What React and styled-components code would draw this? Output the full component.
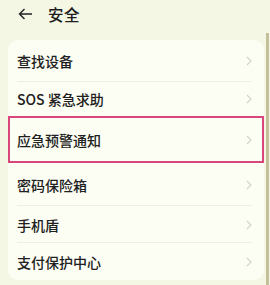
import React from "react";
import styled, { createGlobalStyle } from "styled-components";

const Global = createGlobalStyle`
  html, body { margin: 0; padding: 0; }
  body {
    background: #f3f7e4;
    font-family: "Noto Sans CJK SC", "Noto Sans", sans-serif;
    width: 270px;
    height: 285px;
    overflow: hidden;
  }
`;

const Screen = styled.div`
  display: flex;
  width: 270px;
  height: 285px;
  background: #f3f7e4;
`;

const Main = styled.div`
  flex: 1;
  display: flex;
  flex-direction: column;
  padding: 0 0 0 8px;
`;

const EdgeBar = styled.div`
  width: 3px;
  margin-top: 33px;
  margin-right: 1px;
  background: #c4c09c;
`;

const Header = styled.div`
  display: flex;
  align-items: center;
  height: 28px;
  padding: 0 0 0 10px;
  gap: 15px;
  color: #1e1e1e;
`;

const Title = styled.span`
  font-size: 15.5px;
  font-weight: 500;
  letter-spacing: 0.5px;
`;

const Card = styled.div`
  margin-top: 12px;
  margin-right: 2px;
  background: #fcfdf3;
  border-radius: 10px;
  display: flex;
  flex-direction: column;
`;

const Row = styled.div`
  position: relative;
  display: flex;
  align-items: center;
  justify-content: space-between;
  height: ${(p) => p.h}px;
  padding: 0 12px 0 9px;
  font-size: 14px;
  font-weight: 500;
  color: #202020;
  ${(p) =>
    p.highlight
      ? `outline: 2px solid #d9467c; outline-offset: -2px; box-shadow: 0 0 0 1px rgba(217,70,124,0.25) inset;`
      : ""}
  &::after {
    content: "";
    display: ${(p) => (p.last || p.noline ? "none" : "block")};
    position: absolute;
    left: 9px;
    right: 12px;
    bottom: 0;
    height: 1px;
    background: #eeefe2;
  }
`;

const Chevron = () => (
  <svg width="6" height="10" viewBox="0 0 6 10">
    <path d="M1 1 L5 5 L1 9" fill="none" stroke="#d3d4c8" strokeWidth="1.1" />
  </svg>
);

const items = [
  { t: "查找设备", h: 42 },
  { t: "SOS 紧急求助", h: 34, noline: true },
  { t: "应急预警通知", h: 47, highlight: true, noline: true },
  { t: "密码保险箱", h: 43 },
  { t: "手机盾", h: 37 },
  { t: "支付保护中心", h: 37, last: true },
];

export default function App() {
  return (
    <>
      <Global />
      <Screen>
        <Main>
          <Header>
            <svg width="15" height="12" viewBox="0 0 15 12">
              <path d="M14 6 H1.5 M6.5 1 L1.5 6 L6.5 11" fill="none" stroke="#222" strokeWidth="1.4" />
            </svg>
            <Title>安全</Title>
          </Header>
          <Card>
            {items.map((it) => (
              <Row key={it.t} h={it.h} highlight={it.highlight} last={it.last} noline={it.noline}>
                <span>{it.t}</span>
                <Chevron />
              </Row>
            ))}
          </Card>
        </Main>
        <EdgeBar />
      </Screen>
    </>
  );
}
